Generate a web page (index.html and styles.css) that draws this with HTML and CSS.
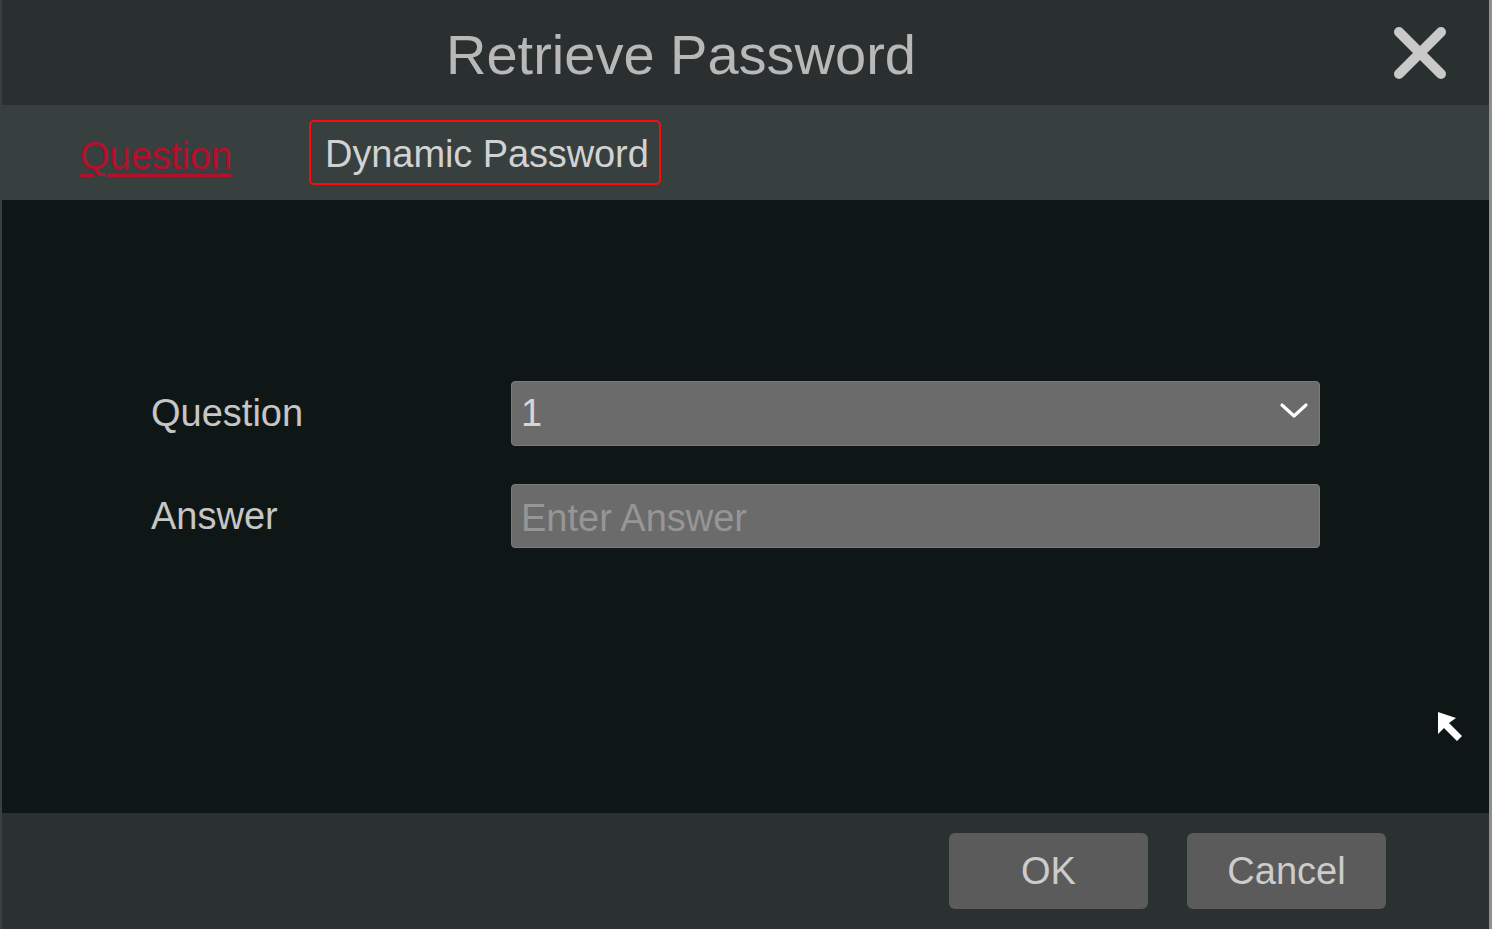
FILE: index.html
```html
<!DOCTYPE html>
<html>
<head>
<meta charset="utf-8">
<title>Retrieve Password</title>
<link rel="stylesheet" href="styles.css">
</head>
<body>
<div class="dialog">
  <header class="head">
    <h1 class="title">Retrieve Password</h1>
    <button class="close" aria-label="Close">
      <svg width="54" height="54" viewBox="0 0 54 54"><path d="M6 6 L48 48 M48 6 L6 48" stroke="#c9c9c9" stroke-width="10" stroke-linecap="round"/></svg>
    </button>
  </header>
  <nav class="tabs">
    <a class="tab tab-active">Question</a>
    <a class="tab tab-focus">Dynamic Password</a>
  </nav>
  <main class="content">
    <div class="row">
      <label class="label">Question</label>
      <div class="field select">
        <span class="value">1</span>
        <svg class="chev" width="30" height="18" viewBox="0 0 30 18"><path d="M3 3 L15 14 L27 3" fill="none" stroke="#ffffff" stroke-width="3.2" stroke-linecap="round" stroke-linejoin="round"/></svg>
      </div>
    </div>
    <div class="row">
      <label class="label">Answer</label>
      <div class="field input"><span class="placeholder">Enter Answer</span></div>
    </div>
    <svg class="cursor" width="30" height="32" viewBox="0 0 30 32"><path d="M2 1 L2 23 L8 17 L21 30 L26 25 L13 12 L20 7 Z" fill="#ffffff"/></svg>
  </main>
  <footer class="foot">
    <button class="btn">OK</button>
    <button class="btn">Cancel</button>
  </footer>
</div>
</body>
</html>
```
FILE: styles.css
```css
html, body {
  margin: 0;
  padding: 0;
  background: #1a1f1f;
}
.dialog {
  width: 1492px;
  height: 929px;
  box-sizing: border-box;
  border-left: 2px solid #3a3f3f;
  border-right: 3px solid #8e9090;
  display: flex;
  flex-direction: column;
  font-family: "Liberation Sans", Arial, sans-serif;
  color: #c8c8c8;
}
.head {
  height: 105px;
  flex: 0 0 105px;
  background: #2a2f2f;
  display: flex;
  align-items: center;
  padding-left: 444px;
  padding-right: 42px;
  box-sizing: border-box;
}
.title {
  margin: 0;
  font-weight: normal;
  font-size: 56px;
  line-height: 1;
  color: #b8b8b8;
  flex: 1;
  padding-top: 4px;
}
.close {
  background: none;
  border: 0;
  padding: 0;
  width: 54px;
  height: 54px;
  cursor: pointer;
}
.tabs {
  height: 95px;
  flex: 0 0 95px;
  background: #373f3f;
  display: flex;
  align-items: center;
  padding-left: 78px;
  box-sizing: border-box;
  gap: 77px;
}
.tab {
  font-size: 38px;
  line-height: 1;
  color: #d0d0d0;
}
.tab-active {
  color: #b4102c;
  text-decoration: underline;
  text-decoration-thickness: 3px;
  text-underline-offset: 5px;
  padding-top: 6px;
}
.tab-focus {
  border: 2px solid #ff0a0a;
  border-radius: 5px;
  height: 65px;
  box-sizing: border-box;
  padding: 3px 10px 0 14px;
  display: flex;
  align-items: center;
  color: #d2d2d2;
  letter-spacing: -0.1px;
}
.content {
  flex: 1;
  background: #0f1716;
  padding: 181px 0 0 149px;
  box-sizing: border-box;
  display: flex;
  flex-direction: column;
  gap: 38px;
  position: relative;
}
.row {
  display: flex;
  align-items: center;
}
.label {
  width: 360px;
  font-size: 38px;
  color: #c6c6c6;
}
.field {
  width: 809px;
  height: 65px;
  box-sizing: border-box;
  background: #6b6b6b;
  border: 1px solid #7b7b7b;
  border-radius: 4px;
  display: flex;
  align-items: center;
  padding-left: 9px;
  font-size: 38px;
}
.input {
  height: 64px;
}
.value {
  color: #d6d6d6;
  flex: 1;
}
.chev {
  margin-right: 10px;
  margin-top: -6px;
}
.placeholder {
  color: #969696;
  padding-top: 4px;
}
.cursor {
  position: absolute;
  left: 1434px;
  top: 511px;
}
.foot {
  height: 116px;
  flex: 0 0 116px;
  background: #2b3130;
  display: flex;
  justify-content: flex-end;
  align-items: flex-start;
  gap: 39px;
  padding: 20px 103px 0 0;
  box-sizing: border-box;
}
.btn {
  width: 199px;
  height: 76px;
  background: #5b5b5b;
  border: 0;
  border-radius: 6px;
  font-family: "Liberation Sans", Arial, sans-serif;
  font-size: 38px;
  color: #cccccc;
  padding: 0;
}
```
